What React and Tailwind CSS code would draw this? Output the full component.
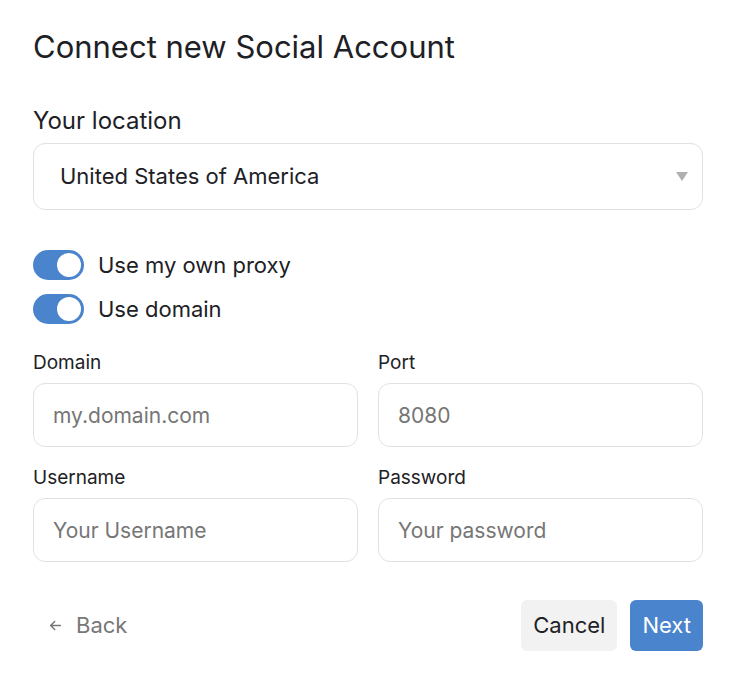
import { useState } from "react";

function Toggle({ on, onChange }) {
  return (
    <button
      type="button"
      onClick={onChange}
      className={`relative h-[30px] w-[51px] shrink-0 rounded-full ${on ? "bg-[#4a84cc]" : "bg-[#d4d4d4]"}`}
    >
      <span
        className={`absolute top-[3px] h-[24px] w-[24px] rounded-full bg-white ${on ? "left-[24px]" : "left-[3px]"}`}
      />
    </button>
  );
}

function Field({ label, placeholder, type = "text" }) {
  return (
    <div className="flex flex-col">
      <label className="mb-[9px] text-[19px] leading-[22px] text-[#1d2125]">{label}</label>
      <input
        type={type}
        placeholder={placeholder}
        className="h-[64px] w-full rounded-[12px] border border-[#e2e2e2] px-[19px] text-[21px] text-[#1d2125] placeholder:text-[#767676] focus:outline-none"
      />
    </div>
  );
}

export default function App() {
  const [proxy, setProxy] = useState(true);
  const [domain, setDomain] = useState(true);

  return (
    <div className="min-h-[684px] w-[742px] bg-white pl-[33px] pr-[39px] pt-[27px] font-['Inter',sans-serif] text-[#1d2125]">
      <h2 className="text-[31px] leading-[40px]">Connect new Social Account</h2>

      <div className="mt-[39px]">
        <label className="block text-[24px] leading-[30px]">Your location</label>
        <div className="relative mt-[7px]">
          <select className="h-[67px] w-full appearance-none rounded-[12px] border border-[#e2e2e2] bg-white pl-[26px] text-[22px] text-[#1d2125] focus:outline-none">
            <option>United States of America</option>
            <option>Canada</option>
            <option>United Kingdom</option>
          </select>
          <span className="pointer-events-none absolute right-[15px] top-[29px] h-0 w-0 border-x-[6px] border-t-[9px] border-x-transparent border-t-[#b0b0b0]" />
        </div>
      </div>

      <div className="mt-[40px] flex flex-col gap-[14px]">
        <div className="flex items-center gap-[14px]">
          <Toggle on={proxy} onChange={() => setProxy(!proxy)} />
          <span className="text-[22px] leading-[28px]">Use my own proxy</span>
        </div>
        <div className="flex items-center gap-[14px]">
          <Toggle on={domain} onChange={() => setDomain(!domain)} />
          <span className="text-[22px] leading-[28px]">Use domain</span>
        </div>
      </div>

      <div className="mt-[28px] grid grid-cols-2 gap-x-[20px] gap-y-[20px]">
        <Field label="Domain" placeholder="my.domain.com" />
        <Field label="Port" placeholder="8080" />
        <Field label="Username" placeholder="Your Username" />
        <Field label="Password" placeholder="Your password" type="password" />
      </div>

      <div className="mt-[38px] flex items-center justify-between">
        <button type="button" className="flex items-center gap-[14px] px-[16px] text-[22px] text-[#777777]">
          <svg width="13" height="13" viewBox="0 0 16 16" fill="none" stroke="currentColor" strokeWidth="1.8" strokeLinecap="round" strokeLinejoin="round">
            <path d="M14 8H2M7 3L2 8l5 5" />
          </svg>
          Back
        </button>
        <div className="flex gap-[13px]">
          <button type="button" className="h-[51px] rounded-[6px] bg-[#f2f2f2] px-[12px] text-[22px] text-[#1d2125]">
            Cancel
          </button>
          <button type="button" className="h-[51px] rounded-[6px] bg-[#4a84cc] px-[12px] text-[22px] text-white">
            Next
          </button>
        </div>
      </div>
    </div>
  );
}
